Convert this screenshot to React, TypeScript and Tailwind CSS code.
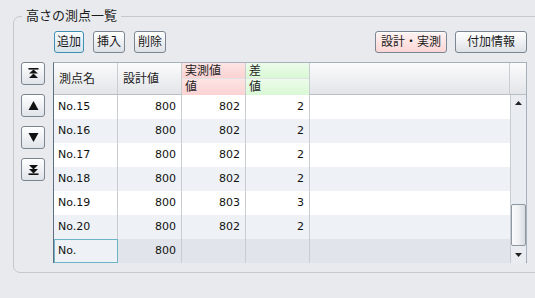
const rows = [
  { name: "No.15", plan: "800", actual: "802", diff: "2" },
  { name: "No.16", plan: "800", actual: "802", diff: "2" },
  { name: "No.17", plan: "800", actual: "802", diff: "2" },
  { name: "No.18", plan: "800", actual: "802", diff: "2" },
  { name: "No.19", plan: "800", actual: "803", diff: "3" },
  { name: "No.20", plan: "800", actual: "802", diff: "2" },
]

const font = { fontFamily: '"DejaVu Sans", "Noto Sans CJK JP", sans-serif' }

const Btn = ({ label, className = "" }: { label: string; className?: string }) => (
  <button
    className={`h-[22px] rounded-[3px] border text-[12px] text-[#1a1a1a] leading-none shadow-[inset_0_1px_0_#fff] ${className}`}
  >
    {label}
  </button>
)

const NavBtn = ({ kind }: { kind: "first" | "up" | "down" | "last" }) => (
  <button className="w-[24px] h-[23px] rounded-[3px] border border-[#7c8693] bg-gradient-to-b from-white to-[#dfe3e8] flex items-center justify-center shadow-[inset_0_1px_0_#fff]">
    <svg width="11" height="11" viewBox="0 0 11 11">
      {kind === "first" && (
        <g fill="#111">
          <rect x="0.5" y="0" width="10" height="1.6" />
          <path d="M5.5 1.5 L10 5.5 H1 Z" />
          <path d="M5.5 5.5 L10 10 H1 Z" />
        </g>
      )}
      {kind === "up" && <path d="M5.5 1 L10.5 10 H0.5 Z" fill="#111" />}
      {kind === "down" && <path d="M0.5 1 H10.5 L5.5 10 Z" fill="#111" />}
      {kind === "last" && (
        <g fill="#111">
          <path d="M1 1 H10 L5.5 5.5 Z" />
          <path d="M1 5 H10 L5.5 9.5 Z" />
          <rect x="0.5" y="9.4" width="10" height="1.6" />
        </g>
      )}
    </svg>
  </button>
)

const HeadCell = ({ label }: { label: string }) => (
  <div className="w-[64px] shrink-0 border-r border-[#c9ccd1] flex items-center pl-[5px] pt-[1px] text-[12px] text-[#222]">
    {label}
  </div>
)

const SplitHead = ({ top, bottom, tone }: { top: string; bottom: string; tone: "pink" | "green" }) => {
  const bg =
    tone === "pink"
      ? "bg-gradient-to-b from-[#fde4e4] to-[#fbd2d2]"
      : "bg-gradient-to-b from-[#ecfcea] to-[#d9f8d5]"
  return (
    <div className="w-[64px] shrink-0 border-r border-[#c9ccd1] flex flex-col">
      <div className={`h-[16px] ${bg} border-b border-[#e0e2e5] pl-[3px] text-[12px] leading-[16px] text-[#222]`}>
        {top}
      </div>
      <div className={`flex-1 ${bg} pl-[3px] text-[12px] leading-[16px] text-[#222]`}>{bottom}</div>
    </div>
  )
}

export default function App() {
  return (
    <div className="w-[535px] h-[298px] bg-[#e8eaed] overflow-hidden pt-[16px] pl-[13px]" style={font}>
      <div className="relative w-[540px] h-[257px] border border-[#c6c8cc] rounded-[7px] pt-[14px] pl-[7px]">
        <div className="absolute left-[8px] -top-[10px] px-[4px] bg-[#e8eaed] text-[13px] leading-[18px] text-[#1c1c1c]">
          高さの測点一覧
        </div>

        <div className="flex items-center">
          <div className="flex gap-[9px] ml-[33px]">
            <Btn label="追加" className="w-[30px] border-[#3d8fb3] bg-gradient-to-b from-[#f7fbfd] to-[#d7e3ea]" />
            <Btn label="挿入" className="w-[32px] border-[#7c8693] bg-gradient-to-b from-white to-[#dde1e6]" />
            <Btn label="削除" className="w-[32px] border-[#7c8693] bg-gradient-to-b from-white to-[#dde1e6]" />
          </div>
          <Btn label="設計・実測" className="ml-[209px] w-[72px] border-[#7c8693] bg-gradient-to-b from-[#fff3f3] to-[#fbd5d5]" />
          <Btn label="付加情報" className="ml-[8px] w-[72px] border-[#7c8693] bg-gradient-to-b from-white to-[#dde1e6]" />
        </div>

        <div className="flex mt-[9px]">
          <div className="flex flex-col gap-[9px] w-[32px]">
            <NavBtn kind="first" />
            <NavBtn kind="up" />
            <NavBtn kind="down" />
            <NavBtn kind="last" />
          </div>

          <div className="w-[474px] h-[201px] border border-[#a6b1bd] border-l-[#5d6e80] border-b-[#5d6e80] bg-white flex flex-col">
            <div className="h-[32px] flex border-b border-[#b9bec5] bg-gradient-to-b from-[#fbfbfc] to-[#e3e5e8]">
              <HeadCell label="測点名" />
              <HeadCell label="設計値" />
              <SplitHead top="実測値" bottom="値" tone="pink" />
              <SplitHead top="差" bottom="値" tone="green" />
              <div className="flex-1 border-r border-[#c9ccd1]" />
              <div className="w-[16px] shrink-0" />
            </div>

            <div className="flex flex-1">
              <div className="flex-1 flex flex-col text-[11px] text-[#111]">
                {rows.map((r, i) => (
                  <div key={r.name} className={`h-[24px] flex ${i % 2 ? "bg-[#eef2f7]" : "bg-white"}`}>
                    <div className="w-[64px] border-r border-[#c9ccd1] flex items-center pl-[4px]">{r.name}</div>
                    <div className="w-[64px] border-r border-[#c9ccd1] flex items-center justify-end pr-[5px]">{r.plan}</div>
                    <div className="w-[64px] border-r border-[#c9ccd1] flex items-center justify-end pr-[5px]">{r.actual}</div>
                    <div className="w-[64px] border-r border-[#c9ccd1] flex items-center justify-end pr-[5px]">{r.diff}</div>
                    <div className="flex-1" />
                  </div>
                ))}
                <div className="h-[24px] flex bg-[#e1e5eb]">
                  <div className="w-[64px] border border-[#6db4c6] bg-[#eef2f7] flex items-center pl-[3px]">No.</div>
                  <div className="w-[64px] border-r border-[#c9ccd1] flex items-center justify-end pr-[5px]">800</div>
                  <div className="w-[64px] border-r border-[#c9ccd1]" />
                  <div className="w-[64px] border-r border-[#c9ccd1]" />
                  <div className="flex-1" />
                </div>
              </div>

              <div className="w-[16px] shrink-0 border-l border-[#c9ccd1] bg-[#e9ecf0] flex flex-col items-center">
                <div className="h-[14px] flex items-center justify-center mt-[1px]">
                  <svg width="7" height="4" viewBox="0 0 7 4"><path d="M3.5 0 L7 4 H0 Z" fill="#222" /></svg>
                </div>
                <div className="flex-1" />
                <div className="w-[15px] h-[42px] rounded-[2px] border border-[#8e98a3] bg-gradient-to-r from-[#fbfbfc] via-[#eef0f2] to-[#d9dde2]" />
                <div className="h-[17px] flex items-center justify-center">
                  <svg width="7" height="4" viewBox="0 0 7 4"><path d="M0 0 H7 L3.5 4 Z" fill="#222" /></svg>
                </div>
              </div>
            </div>
          </div>
        </div>
      </div>
    </div>
  )
}
